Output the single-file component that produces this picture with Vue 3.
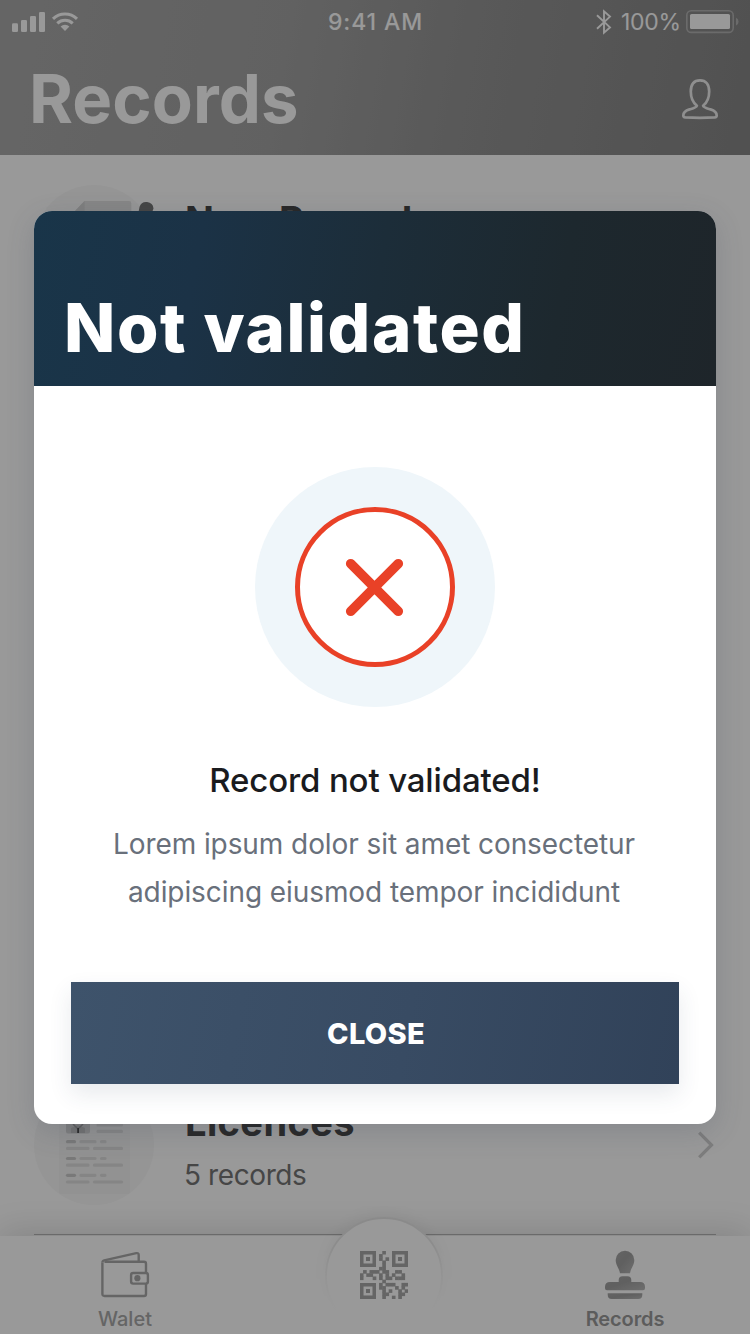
<script setup>
const finder = [
  [0, 0],
  [10, 0],
  [0, 10]
]
const modules = [
  [7],
  [6],
  [6, 8],
  [7],
  [7],
  [6, 7],
  [1, 3, 4, 5, 7, 8, 11, 12],
  [0, 2, 3, 6, 8, 10, 13],
  [0, 4, 6, 8, 9, 11, 12, 13],
  [7],
  [6, 8, 9, 10, 13, 14],
  [6, 7, 11, 13],
  [7, 9, 12, 14],
  [7, 8, 12, 13],
  [7, 10, 12]
]
const cells = modules.flatMap((cols, y) => cols.map((x) => ({ x, y })))
const docRows = [56.7, 73.5, 90.3]
</script>

<template>
  <div class="phone">
    <header class="top">
      <div class="status">
        <div class="side">
          <svg width="68" height="24" viewBox="0 0 68 24" fill="#fff">
            <rect x="0" y="13.2" width="6" height="8.8" rx="1.3" />
            <rect x="9" y="10" width="6" height="12" rx="1.3" />
            <rect x="18" y="6" width="6" height="16" rx="1.3" />
            <rect x="27" y="2" width="6" height="20" rx="1.3" />
            <g fill="none" stroke="#fff" stroke-width="3.1">
              <path d="M41 8.8a17.6 17.6 0 0 1 24 0" />
              <path d="M45.3 13.3a11.3 11.3 0 0 1 15.4 0" />
            </g>
            <path d="M53 21l-4.4-4.4a6.4 6.4 0 0 1 8.8 0z" />
          </svg>
        </div>
        <div class="time">9:41 AM</div>
        <div class="side right">
          <svg class="bt" width="16" height="26" viewBox="0 0 16 26" fill="none" stroke="#fff" stroke-width="1.9">
            <path d="M1 6.2l13 12.2-6 5.3V2.3l6 5.3L1 19.8" />
          </svg>
          <span class="pct">100%</span>
          <svg width="53" height="24" viewBox="0 0 53 24">
            <rect x="0.8" y="0.8" width="46.4" height="21.6" rx="4.5" fill="none" stroke="#fff" stroke-opacity=".35" stroke-width="1.6" />
            <rect x="4" y="4" width="40" height="15" rx="1.6" fill="#fff" />
            <path d="M50 7.8q2.6 1.2 2.6 3.9t-2.6 3.9z" fill="#fff" fill-opacity=".35" />
          </svg>
        </div>
      </div>
      <div class="bar">
        <h1>Records</h1>
        <svg width="40" height="44" viewBox="0 0 40 44" fill="none" stroke="#eee" stroke-width="2.7" stroke-linejoin="round">
          <path d="M20 3.3C14 3.3 10.8 7.4 10.8 14.5C10.8 21 12.8 25.5 16.9 28.8C16.5 30.6 13.5 31.3 9.5 32.4C5 33.7 3.3 35.5 3.3 38.5Q3.3 40.2 5.3 40.4Q20 41.2 34.7 40.4Q36.7 40.2 36.7 38.5C36.7 35.5 35 33.7 30.5 32.4C26.5 31.3 23.5 30.6 23.1 28.8C27.2 25.5 29.2 21 29.2 14.5C29.2 7.4 26 3.3 20 3.3Z" />
        </svg>
      </div>
    </header>

    <main class="list">
      <article class="row first">
        <svg width="120" height="120" viewBox="0 0 120 120">
          <circle cx="60" cy="60" r="60" fill="#f9f9f9" />
          <path d="M41 26L50.5 16H95q2.3 0 2.3 2.3V105H41z" fill="#dfdfdf" />
          <path d="M41 26L50.5 16V26z" fill="#d2d2d2" />
          <path d="M102 40L105.5 22a7.2 7.2 0 0 1 14 1.5L112 44z" fill="#747474" />
        </svg>
        <div class="info"><h2>New Record</h2></div>
      </article>
      <article class="row last">
        <svg width="120" height="120" viewBox="0 0 120 120">
          <circle cx="60" cy="60" r="60" fill="#f9f9f9" />
          <rect x="25" y="12" width="71" height="97" rx="2" fill="#f3f3f3" />
          <rect x="32" y="20" width="24" height="28.5" rx="2" fill="#d3d3d3" />
          <path d="M37 48v-5l7-3 7 3v5z" fill="#bcbcbc" />
          <path d="M39 39l5 5 5-5" fill="none" stroke="#999" stroke-width="1.5" />
          <path d="M43.2 43h1.8v5h-1.8z" fill="#444" />
          <g fill="none" stroke="#dedede" stroke-width="3.2" stroke-linecap="round">
            <path d="M64 40h23.5M64 46.4h23.5" />
            <g v-for="y in docRows" :key="y">
              <path :d="`M33.5 ${y}h7`" stroke="#cacaca" />
              <path :d="`M47 ${y}h14M67.5 ${y}h3.5`" />
              <path :d="`M33.5 ${y + 6.7}h20.5M60.5 ${y + 6.7}h27`" />
            </g>
          </g>
        </svg>
        <div class="info">
          <h2>Licences</h2>
          <p>5 records</p>
        </div>
        <svg class="chev" width="18" height="30" viewBox="0 0 18 30" fill="none" stroke="#d0d0d0" stroke-width="3.2">
          <path d="M1.2 2.7L13.5 15 1.2 27.3" />
        </svg>
      </article>
    </main>

    <nav class="tabs">
      <div class="tab">
        <svg width="50" height="48" viewBox="0 0 50 48" fill="none" stroke="#a9a9a9" stroke-width="2.4" stroke-linejoin="round">
          <path d="M2.4 11.5Q2.4 9.7 4.2 9.3L36.3 2.2Q38.7 1.7 38.7 4V10.5" />
          <path d="M4.5 10.8H44Q46 10.8 46 12.8V43Q46 45 44 45H4.5Q2.4 45 2.4 43V11.5" />
          <rect x="31.1" y="22" width="16.8" height="10.6" rx="2" fill="#fff" />
          <circle cx="37.4" cy="27.2" r="3.1" fill="#a9a9a9" stroke="none" />
        </svg>
        <span>Walet</span>
      </div>
      <div class="scan">
        <svg class="disc" width="140" height="130" viewBox="0 0 140 130">
          <defs>
            <linearGradient id="ring" x1="0" y1="0" x2="0" y2="1">
              <stop offset="0" stop-color="#e6e6e6" />
              <stop offset=".5" stop-color="#efefef" />
              <stop offset="1" stop-color="#fff" />
            </linearGradient>
          </defs>
          <circle cx="70" cy="70" r="58" fill="#fff" stroke="url(#ring)" stroke-width="1.8" />
        </svg>
        <svg class="qr" width="48" height="48" viewBox="0 0 15 15">
          <g v-for="f in finder" :key="f.join()" fill="#a9a9a9">
            <rect :x="f[0] + 0.55" :y="f[1] + 0.55" width="3.9" height="3.9" fill="none" stroke="#a9a9a9" stroke-width="1.1" />
            <rect :x="f[0] + 1.87" :y="f[1] + 1.87" width="1.26" height="1.26" />
          </g>
          <rect v-for="c in cells" :key="c.x + '-' + c.y" :x="c.x - 0.04" :y="c.y - 0.04" width="1.14" height="1.14" fill="#a9a9a9" />
        </svg>
      </div>
      <div class="tab on">
        <svg width="42" height="50" viewBox="0 0 42 50">
          <defs>
            <linearGradient id="ink" x1="0" y1="0" x2="1" y2="1">
              <stop offset="0" stop-color="#a6a6a6" />
              <stop offset=".45" stop-color="#a0a0a0" />
              <stop offset="1" stop-color="#b8b8b8" />
            </linearGradient>
          </defs>
          <g fill="url(#ink)">
            <path d="M21 .8a9.3 9.3 0 0 1 9.3 9.5C30.3 15 27 18 26 23.3H16C15 18 11.7 15 11.7 10.3A9.3 9.3 0 0 1 21 .8z" />
            <path d="M18.5 26.3h5q3.8 0 3.8 3.8V32H36q5 0 5 5v1.3q0 2-2 2H3q-2 0-2-2V37q0-5 5-5h8.7v-1.9q0-3.8 3.8-3.8z" />
            <path d="M3.7 43.3h34.6v1.2q0 4.5-4 4.5H7.7q-4 0-4-4.5z" />
          </g>
        </svg>
        <span>Records</span>
      </div>
    </nav>

    <div class="overlay">
      <section class="modal">
        <div class="head"><h1>Not validated</h1></div>
        <div class="body">
          <svg width="240" height="240" viewBox="0 0 240 240">
            <circle cx="120" cy="120" r="120" fill="#eff6fa" />
            <circle cx="120" cy="120" r="77.5" fill="#fff" stroke="#e94127" stroke-width="5" />
            <path d="M95.7 96.7L143.3 144.3M143.3 96.7L95.7 144.3" stroke="#e94127" stroke-width="9.6" stroke-linecap="round" />
          </svg>
          <h3>Record not validated!</h3>
          <p>Lorem ipsum dolor sit amet consectetur<br>adipiscing eiusmod tempor incididunt</p>
          <button type="button">CLOSE</button>
        </div>
      </section>
    </div>
  </div>
</template>

<style>
body {
  margin: 0;
}
</style>

<style scoped>
.phone {
  position: relative;
  width: 750px;
  height: 1334px;
  overflow: hidden;
  display: flex;
  flex-direction: column;
  background: #fff;
  font-family: Inter, "Liberation Sans", sans-serif;
}
svg {
  display: block;
  flex: none;
}
h1,
h2,
h3,
p {
  margin: 0;
}
.top {
  height: 155px;
  flex: none;
  color: #fff;
  background: linear-gradient(100deg, #a9a9a9, #a2a2a2 38%, #949494 62%, #878787);
}
.status {
  height: 44px;
  display: flex;
  align-items: center;
  padding: 0 11px 0 12px;
  font-size: 23px;
}
.side {
  flex: 1;
  display: flex;
  align-items: center;
}
.right {
  justify-content: flex-end;
}
.bt {
  margin-right: 9px;
}
.pct {
  width: 65px;
  letter-spacing: -0.3px;
}
.time {
  font-weight: 500;
  letter-spacing: 0.9px;
}
.bar {
  display: flex;
  justify-content: space-between;
  align-items: center;
  height: 80px;
  margin-top: 15px;
  padding: 0 30px 0 29px;
}
.bar h1 {
  font-size: 67px;
  line-height: 80px;
  font-weight: 700;
  letter-spacing: 0.1px;
}
.list {
  flex: 1;
  display: flex;
  flex-direction: column;
  justify-content: space-between;
  padding: 0 34px;
  margin-bottom: 1px;
}
.row {
  display: flex;
  align-items: flex-start;
  box-sizing: border-box;
  height: 180px;
  padding-top: 30px;
}
.last {
  border-bottom: 1px solid #c0c0c0;
}
.info {
  flex: 1;
  margin-left: 31px;
  padding-top: 13px;
}
.first .info {
  padding-top: 11px;
}
.info h2 {
  font-size: 38px;
  line-height: 48px;
  font-weight: 700;
  letter-spacing: 0.4px;
  color: #444;
}
.info p {
  margin: 9px 0 0 -1px;
  font-size: 28px;
  line-height: 40px;
  letter-spacing: -0.4px;
  color: #757575;
}
.chev {
  margin: 45px 0 0;
}
.tabs {
  height: 98px;
  flex: none;
  display: grid;
  grid-template-columns: 250px 250px 250px;
  position: relative;
  box-shadow: 0 -4px 34px rgba(0, 0, 0, 0.14);
}
.tab {
  display: flex;
  flex-direction: column;
  align-items: center;
  padding-top: 15px;
  color: #a9a9a9;
  font-size: 20px;
  font-weight: 500;
}
.tab.on {
  padding-top: 14px;
  color: #9a9a9a;
  font-weight: 600;
}
.tab span {
  line-height: 24px;
  margin-top: 8px;
}
.tab.on span {
  margin-top: 7px;
  letter-spacing: -0.1px;
}
.scan {
  position: relative;
  display: flex;
  justify-content: center;
  padding: 15px 0 0 18px;
}
.disc {
  position: absolute;
  left: 64px;
  top: -30px;
  filter: drop-shadow(0 -5px 6px rgba(0, 0, 0, 0.04));
  mask-image: linear-gradient(#000 30%, transparent 82%);
}
.qr {
  position: relative;
}
.overlay {
  position: absolute;
  inset: 0;
  padding: 211px 34px 0;
  background: rgba(0, 0, 0, 0.4);
}
.modal {
  height: 913px;
  border-radius: 18px;
  overflow: hidden;
  background: #fff;
  box-shadow: 0 8px 28px rgba(60, 68, 92, 0.2);
}
.head {
  height: 175px;
  box-sizing: border-box;
  padding: 75px 30px 0;
  background: linear-gradient(100deg, #193549, #1b3246 24%, #1c2d39 50%, #1d282e 76%, #1e252a);
}
.head h1 {
  color: #fff;
  font-size: 67px;
  line-height: 84px;
  font-weight: 800;
  letter-spacing: 1.6px;
  white-space: nowrap;
}
.body {
  display: flex;
  flex-direction: column;
  align-items: center;
  padding-top: 81px;
  text-align: center;
}
.body h3 {
  margin-top: 51px;
  font-size: 33px;
  line-height: 44px;
  font-weight: 500;
  letter-spacing: -0.15px;
  color: #1a1b1e;
}
.body p {
  margin-top: 18px;
  padding-right: 2px;
  font-size: 28px;
  line-height: 48px;
  letter-spacing: -0.08px;
  color: #69707b;
  white-space: nowrap;
}
button {
  margin-top: 66px;
  width: 608px;
  height: 102px;
  padding: 0 0 0 2px;
  border: 0;
  color: #fff;
  font: 800 29px Inter, "Liberation Sans", sans-serif;
  letter-spacing: 0.3px;
  background: linear-gradient(100deg, #3e536b, #384b63 55%, #314259);
  box-shadow: 0 10px 22px rgba(50, 65, 95, 0.11);
}
</style>
